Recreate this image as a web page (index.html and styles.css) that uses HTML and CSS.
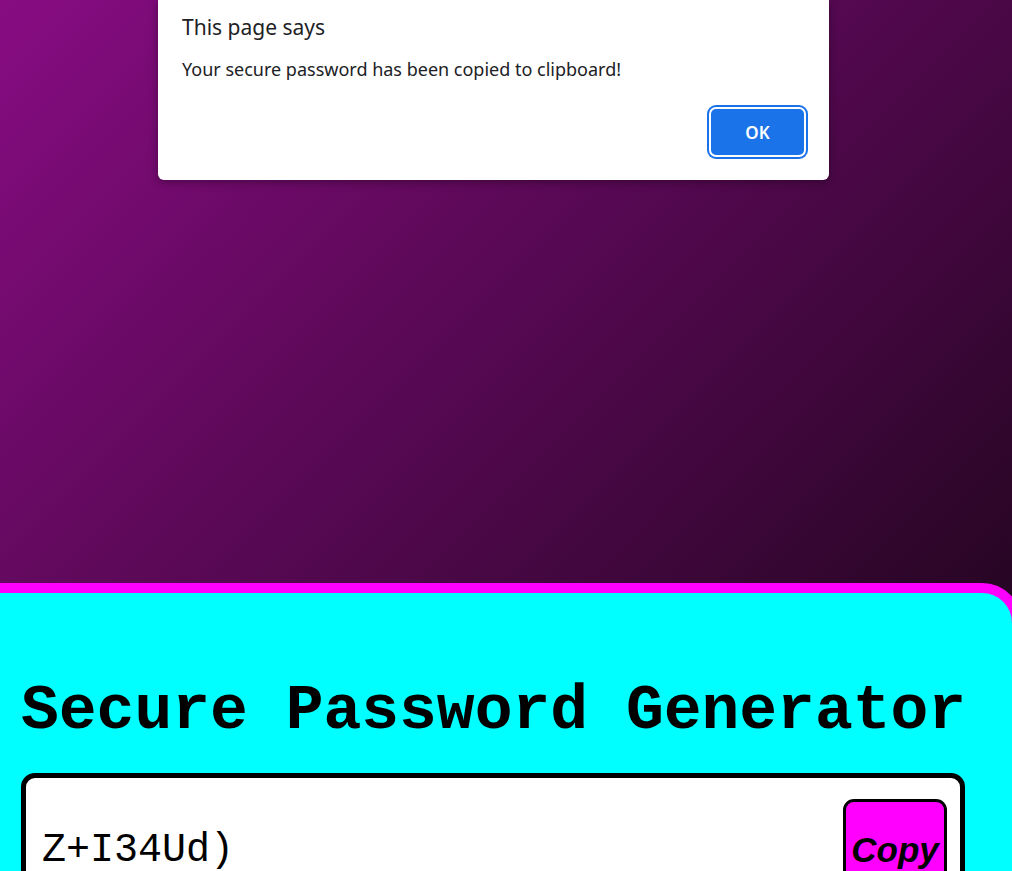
FILE: index.html
```html
<!DOCTYPE html>
<html lang="en">
<head>
<meta charset="utf-8">
<title>Secure Password Generator</title>
<link rel="stylesheet" href="styles.css">
</head>
<body>
<div class="stage">
  <section class="card">
    <h1 class="title">Secure Password Generator</h1>
    <div class="result">
      <span class="password">Z+I34Ud)</span>
      <button class="copy">Copy</button>
    </div>
  </section>
</div>
<div class="dialog" role="alertdialog">
  <div class="dialog-title">This page says</div>
  <div class="dialog-msg">Your secure password has been copied to clipboard!</div>
  <div class="dialog-actions">
    <button class="ok">OK</button>
  </div>
</div>
</body>
</html>
```
FILE: styles.css
```css
html, body {
  margin: 0;
  height: 100%;
}
body {
  width: 1012px;
  height: 871px;
  overflow: hidden;
  background: linear-gradient(135deg, #870c82 0%, #160413 100%);
  font-family: "Liberation Sans", Arial, sans-serif;
}
.stage {
  padding-top: 583px;
}
.card {
  margin-left: -38px;
  width: 1060px;
  box-sizing: border-box;
  border: 10px solid #ff00ff;
  border-radius: 40px;
  background: #00ffff;
  padding: 81px 0 60px 49px;
  height: 500px;
}
.title {
  margin: 0 0 23px;
  font-family: "Liberation Mono", "Courier New", monospace;
  font-weight: bold;
  font-size: 63px;
  line-height: 76px;
  color: #000;
  white-space: nowrap;
}
.result {
  width: 944px;
  box-sizing: border-box;
  border: 5px solid #000;
  border-radius: 14px;
  background: #fff;
  display: flex;
  align-items: center;
  justify-content: space-between;
  padding: 21px 13px 21px 16px;
}
.password {
  font-family: "Liberation Mono", "Courier New", monospace;
  font-size: 40px;
  color: #000;
}
.copy {
  font-family: "Liberation Sans", Arial, sans-serif;
  font-weight: bold;
  font-style: italic;
  font-size: 35px;
  color: #000;
  background: #ff00ff;
  border: 3px solid #000;
  border-radius: 11px;
  padding: 28px 2px;
  width: 104px;
  text-align: center;
}
.dialog {
  position: absolute;
  left: 158px;
  top: 0;
  width: 671px;
  height: 180px;
  box-sizing: border-box;
  background: #fff;
  border-radius: 0 0 6px 6px;
  box-shadow: 0 2px 8px rgba(0, 0, 0, 0.35);
  padding: 12px 24px 0 24px;
  font-family: "Noto Sans", "Open Sans", sans-serif;
  color: #202124;
}
.dialog-title {
  font-size: 21px;
  line-height: 30px;
}
.dialog-msg {
  font-size: 18px;
  line-height: 26px;
  margin-top: 14px;
}
.dialog-actions {
  display: flex;
  justify-content: flex-end;
  margin-top: 25px;
  margin-right: -1px;
}
.ok {
  width: 97px;
  height: 50px;
  box-sizing: border-box;
  background: #1a73e8;
  color: #fff;
  font-family: "Noto Sans", "Open Sans", sans-serif;
  font-weight: 600;
  font-size: 17px;
  border: 2px solid #fff;
  border-radius: 7px;
  box-shadow: 0 0 0 2px #1a73e8;
  padding: 0;
}
```
